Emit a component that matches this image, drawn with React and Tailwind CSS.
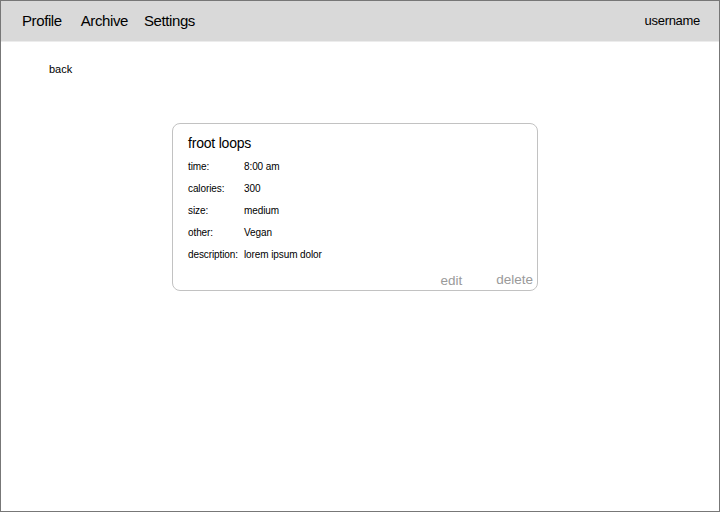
import React from "react";

const details = [
  { label: "time:", value: "8:00 am" },
  { label: "calories:", value: "300" },
  { label: "size:", value: "medium" },
  { label: "other:", value: "Vegan" },
  { label: "description:", value: "lorem ipsum dolor" },
];

const App = () => {
  return (
    <div
      className="w-[720px] h-[512px] bg-white border border-[#777777] flex flex-col text-black overflow-hidden"
      style={{ fontFamily: '"Liberation Sans", Arial, sans-serif' }}
    >
      {/* Top bar */}
      <div className="h-[41px] bg-[#d9d9d9] border-b border-[#ececec] flex items-center pl-[21px] pr-[19px] shrink-0">
        <nav className="flex items-center text-[15px] tracking-[-0.4px] mt-[1px]">
          <span>Profile</span>
          <span className="ml-[19px]">Archive</span>
          <span className="ml-[16px]">Settings</span>
        </nav>
        <div className="ml-auto text-[13px] tracking-[-0.3px]">username</div>
      </div>

      {/* Back link */}
      <div className="pl-[48px] pt-[20px] text-[11px] leading-[14px] text-black">back</div>

      {/* Entry card */}
      <div className="flex pl-[171px] pt-[47px]">
        <div className="w-[366px] h-[168px] border border-[#c2c2c2] rounded-[8px] flex flex-col pl-[15px] pr-[4px] pt-[9px]">
          <div className="text-[14px] leading-[20px] tracking-[-0.2px]">froot loops</div>
          <div className="mt-[2px] flex flex-col text-[10px] tracking-[-0.1px]">
            {details.map((d) => (
              <div key={d.label} className="flex h-[22px] items-center">
                <span className="w-[56px]">{d.label}</span>
                <span>{d.value}</span>
              </div>
            ))}
          </div>
          <div className="mt-auto flex justify-end items-center text-[13.5px] text-[#9a9a9a] leading-[18px]">
            <span className="mt-[3px]">edit</span>
            <span className="ml-[34px]">delete</span>
          </div>
        </div>
      </div>
    </div>
  );
};

export default App;
